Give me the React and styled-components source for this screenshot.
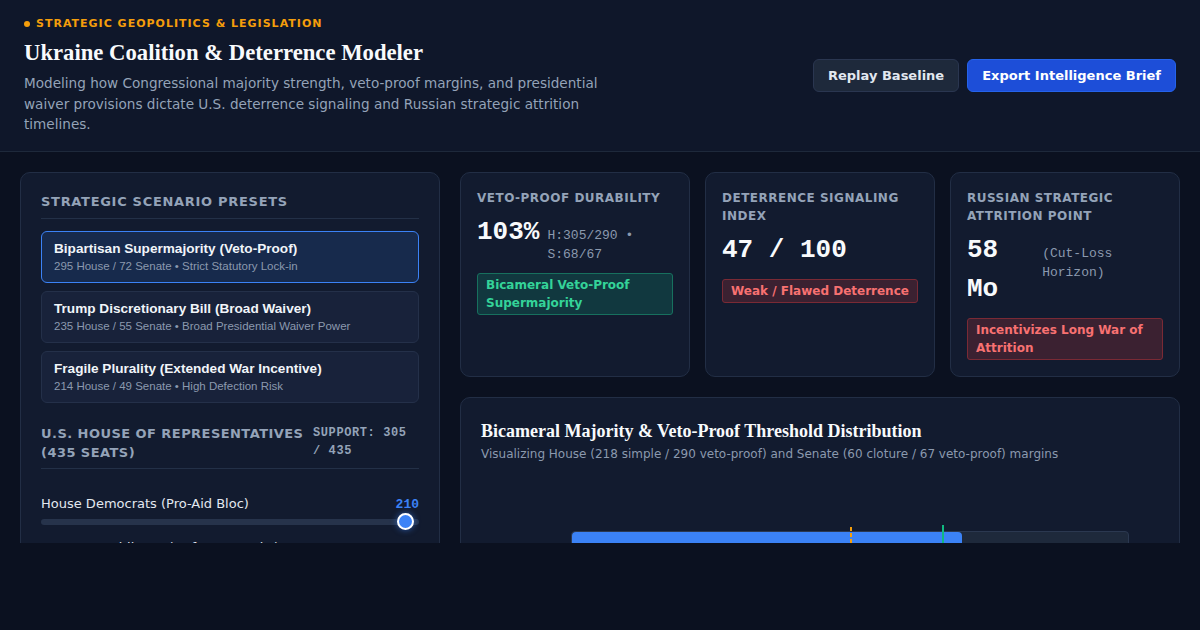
import React, { useState } from "react";
import styled, { createGlobalStyle } from "styled-components";

const GlobalStyle = createGlobalStyle`
  * { box-sizing: border-box; }
  html, body {
    margin: 0;
    padding: 0;
    background: #0b1120;
  }
  body {
    font-family: "DejaVu Sans", "Noto Sans", sans-serif;
    color: #e2e8f0;
  }
`;

const SCENARIOS = [
  {
    id: "bipartisan",
    title: "Bipartisan Supermajority (Veto-Proof)",
    meta: "295 House / 72 Senate • Strict Statutory Lock-in",
  },
  {
    id: "trump",
    title: "Trump Discretionary Bill (Broad Waiver)",
    meta: "235 House / 55 Senate • Broad Presidential Waiver Power",
  },
  {
    id: "fragile",
    title: "Fragile Plurality (Extended War Incentive)",
    meta: "214 House / 49 Senate • High Defection Risk",
  },
];

const HOUSE_SEATS = 435;
const HOUSE_SIMPLE = 218;
const HOUSE_VETO = 290;

const App = () => {
  const [active, setActive] = useState("bipartisan");
  const [dems, setDems] = useState(210);
  const [reps, setReps] = useState(95);
  const support = dems + reps;

  const pct = (n) => `${(n / HOUSE_SEATS) * 100}%`;

  return (
    <>
      <GlobalStyle />
      <Frame>
        <Header>
          <HeaderText>
            <Eyebrow>Strategic Geopolitics &amp; Legislation</Eyebrow>
            <Title>Ukraine Coalition &amp; Deterrence Modeler</Title>
            <Lead>
              Modeling how Congressional majority strength, veto-proof margins,
              and presidential waiver provisions dictate U.S. deterrence
              signaling and Russian strategic attrition timelines.
            </Lead>
          </HeaderText>
          <HeaderActions>
            <Button>Replay Baseline</Button>
            <Button $primary>Export Intelligence Brief</Button>
          </HeaderActions>
        </Header>

        <Main>
          <Panel>
            <PanelHeading>Strategic Scenario Presets</PanelHeading>
            <PresetList>
              {SCENARIOS.map((s) => (
                <Preset
                  key={s.id}
                  $active={active === s.id}
                  onClick={() => setActive(s.id)}
                >
                  <PresetTitle>{s.title}</PresetTitle>
                  <PresetMeta>{s.meta}</PresetMeta>
                </Preset>
              ))}
            </PresetList>

            <ChamberHeader>
              <ChamberTitle>U.S. House of Representatives (435 Seats)</ChamberTitle>
              <ChamberCount>
                Support: {support} / {HOUSE_SEATS}
              </ChamberCount>
            </ChamberHeader>

            <SliderGroup>
              <SliderLabelRow>
                <SliderLabel>House Democrats (Pro-Aid Bloc)</SliderLabel>
                <SliderValue>{dems}</SliderValue>
              </SliderLabelRow>
              <Range
                type="range"
                min={0}
                max={213}
                value={dems}
                onChange={(e) => setDems(Number(e.target.value))}
              />
            </SliderGroup>
            <SliderGroup>
              <SliderLabelRow>
                <SliderLabel>House Republicans (Defense Hawks)</SliderLabel>
                <SliderValue>{reps}</SliderValue>
              </SliderLabelRow>
              <Range
                type="range"
                min={0}
                max={222}
                value={reps}
                onChange={(e) => setReps(Number(e.target.value))}
              />
            </SliderGroup>
          </Panel>

          <RightColumn>
            <StatGrid>
              <StatCard>
                <StatLabel>Veto-Proof Durability</StatLabel>
                <StatRow>
                  <StatValue>103%</StatValue>
                  <StatAside>H:305/290 • S:68/67</StatAside>
                </StatRow>
                <Badge $tone="good">Bicameral Veto-Proof Supermajority</Badge>
              </StatCard>
              <StatCard>
                <StatLabel>Deterrence Signaling Index</StatLabel>
                <StatRow>
                  <StatValue>47 / 100</StatValue>
                </StatRow>
                <Badge $tone="bad">Weak / Flawed Deterrence</Badge>
              </StatCard>
              <StatCard>
                <StatLabel>Russian Strategic Attrition Point</StatLabel>
                <StatRow>
                  <StatValue>58 Mo</StatValue>
                  <StatAside>(Cut-Loss Horizon)</StatAside>
                </StatRow>
                <Badge $tone="bad">Incentivizes Long War of Attrition</Badge>
              </StatCard>
            </StatGrid>

            <ChartCard>
              <ChartTitle>
                Bicameral Majority &amp; Veto-Proof Threshold Distribution
              </ChartTitle>
              <ChartSub>
                Visualizing House (218 simple / 290 veto-proof) and Senate (60
                cloture / 67 veto-proof) margins
              </ChartSub>
              <ChartBody>
                <BarRow>
                  <BarLabel>House</BarLabel>
                  <Track>
                    <Fill style={{ width: pct(support) }} />
                    <Marker $kind="simple" style={{ left: pct(HOUSE_SIMPLE) }} />
                    <Marker $kind="veto" style={{ left: pct(HOUSE_VETO) }} />
                  </Track>
                  <BarValue>{support}</BarValue>
                </BarRow>
              </ChartBody>
            </ChartCard>
          </RightColumn>
        </Main>
      </Frame>
    </>
  );
};

export default App;

// Styled Components
const Frame = styled.div`
  height: 543px;
  overflow: hidden;
  display: flex;
  flex-direction: column;
`;

const Header = styled.header`
  display: flex;
  align-items: center;
  justify-content: space-between;
  padding: 16px 24px 16px;
  background: #0f172a;
  border-bottom: 1px solid #1e293b;
`;

const HeaderText = styled.div`
  display: flex;
  flex-direction: column;
`;

const Eyebrow = styled.div`
  display: flex;
  align-items: center;
  gap: 6px;
  font-size: 11px;
  font-weight: bold;
  letter-spacing: 1px;
  text-transform: uppercase;
  color: #f59e0b;
  line-height: 16px;

  &::before {
    content: "";
    width: 6px;
    height: 6px;
    border-radius: 50%;
    background: #f59e0b;
  }
`;

const Title = styled.h1`
  margin: 7px 0 0;
  font-family: "Liberation Serif", "Times New Roman", serif;
  font-size: 22.7px;
  line-height: 28px;
  font-weight: bold;
  color: #f8fafc;
`;

const Lead = styled.p`
  margin: 6px 0 0;
  max-width: 600px;
  font-size: 13.6px;
  line-height: 20.5px;
  color: #94a3b8;
`;

const HeaderActions = styled.div`
  display: flex;
  gap: 8px;
`;

const Button = styled.button`
  font-family: "DejaVu Sans", sans-serif;
  font-size: 13px;
  font-weight: bold;
  line-height: 17px;
  padding: 7px 14px;
  border-radius: 6px;
  cursor: pointer;
  color: ${(p) => (p.$primary ? "#ffffff" : "#e2e8f0")};
  background: ${(p) => (p.$primary ? "#1d4ed8" : "#1e293b")};
  border: 1px solid ${(p) => (p.$primary ? "#2563eb" : "#2a3650")};
`;

const Main = styled.main`
  flex: 1;
  display: grid;
  grid-template-columns: 420px 1fr;
  gap: 20px;
  padding: 20px;
  align-items: start;
`;

const Panel = styled.section`
  background: #121b2f;
  border: 1px solid #222e45;
  border-radius: 10px;
  padding: 20px;
`;

const PanelHeading = styled.h2`
  margin: 0;
  padding-bottom: 7px;
  border-bottom: 1px solid #233047;
  font-size: 13px;
  line-height: 18px;
  font-weight: bold;
  letter-spacing: 0.7px;
  text-transform: uppercase;
  color: #94a3b8;
`;

const PresetList = styled.div`
  display: flex;
  flex-direction: column;
  gap: 8px;
  margin-top: 12px;
`;

const Preset = styled.button`
  display: flex;
  flex-direction: column;
  align-items: flex-start;
  text-align: left;
  width: 100%;
  padding: 9px 12px;
  border-radius: 6px;
  cursor: pointer;
  font-family: "Liberation Sans", Arial, sans-serif;
  background: ${(p) => (p.$active ? "#172a4c" : "#18223a")};
  border: 1px solid ${(p) => (p.$active ? "#3b82f6" : "#243049")};
`;

const PresetTitle = styled.span`
  font-size: 13.6px;
  line-height: 16px;
  font-weight: bold;
  color: #f1f5f9;
`;

const PresetMeta = styled.span`
  margin-top: 2px;
  font-size: 11.5px;
  line-height: 14px;
  color: #8b99ae;
`;

const ChamberHeader = styled.div`
  display: flex;
  justify-content: space-between;
  align-items: flex-start;
  margin-top: 21px;
  padding-bottom: 6px;
  border-bottom: 1px solid #233047;
`;

const ChamberTitle = styled.h3`
  margin: 0;
  flex: 1;
  font-size: 13px;
  line-height: 19px;
  font-weight: bold;
  letter-spacing: 0.45px;
  text-transform: uppercase;
  color: #94a3b8;
`;

const ChamberCount = styled.span`
  width: 106px;
  flex-shrink: 0;
  font-family: "Liberation Mono", "Courier New", monospace;
  font-size: 12px;
  line-height: 18px;
  font-weight: bold;
  letter-spacing: 0.6px;
  text-transform: uppercase;
  color: #94a3b8;
`;

const SliderGroup = styled.div`
  margin-top: 26px;

  & + & {
    margin-top: 14px;
  }
`;

const SliderLabelRow = styled.div`
  display: flex;
  justify-content: space-between;
  align-items: baseline;
`;

const SliderLabel = styled.span`
  font-size: 13px;
  line-height: 18px;
  color: #e2e8f0;
`;

const SliderValue = styled.span`
  font-family: "Liberation Mono", "Courier New", monospace;
  font-size: 13px;
  font-weight: bold;
  color: #3b82f6;
`;

const Range = styled.input`
  -webkit-appearance: none;
  appearance: none;
  display: block;
  width: 100%;
  height: 6px;
  margin: 6px 0 0;
  border-radius: 3px;
  background: #26334b;
  outline: none;

  &::-webkit-slider-thumb {
    -webkit-appearance: none;
    width: 17px;
    height: 17px;
    border-radius: 50%;
    background: #3b82f6;
    border: 2px solid #ffffff;
    box-shadow: 0 0 6px rgba(59, 130, 246, 0.6);
    cursor: pointer;
  }
`;

const RightColumn = styled.div`
  display: flex;
  flex-direction: column;
  gap: 20px;
  min-width: 0;
`;

const StatGrid = styled.div`
  display: grid;
  grid-template-columns: repeat(3, 1fr);
  gap: 15px;
`;

const StatCard = styled.div`
  background: #121b2f;
  border: 1px solid #222e45;
  border-radius: 10px;
  padding: 16px;
  display: flex;
  flex-direction: column;
  align-items: flex-start;
`;

const StatLabel = styled.div`
  font-size: 12px;
  line-height: 18px;
  font-weight: bold;
  letter-spacing: 0.5px;
  text-transform: uppercase;
  color: #94a3b8;
`;

const StatRow = styled.div`
  display: flex;
  align-items: baseline;
  gap: 8px;
  margin-top: 6px;
  width: 100%;
`;

const StatValue = styled.span`
  font-family: "Liberation Mono", "Courier New", monospace;
  font-size: 26px;
  line-height: 39px;
  font-weight: bold;
  color: #f8fafc;
`;

const StatAside = styled.span`
  font-family: "Liberation Mono", "Courier New", monospace;
  font-size: 13px;
  line-height: 19px;
  color: #8b99ae;
`;

const BADGE_TONES = {
  good: { bg: "#11383f", border: "#17705e", fg: "#34d399" },
  bad: { bg: "#3b2131", border: "#7a2a35", fg: "#f87171" },
};

const Badge = styled.span`
  margin-top: 9px;
  padding: 2px 8px;
  border-radius: 3px;
  font-size: 12px;
  line-height: 18px;
  font-weight: bold;
  background: ${(p) => BADGE_TONES[p.$tone].bg};
  border: 1px solid ${(p) => BADGE_TONES[p.$tone].border};
  color: ${(p) => BADGE_TONES[p.$tone].fg};
`;

const ChartCard = styled.section`
  background: #121b2f;
  border: 1px solid #222e45;
  border-radius: 10px;
  padding: 21px 20px 24px;
`;

const ChartTitle = styled.h3`
  margin: 0;
  font-family: "Liberation Serif", "Times New Roman", serif;
  font-size: 18px;
  line-height: 24px;
  font-weight: bold;
  color: #f8fafc;
`;

const ChartSub = styled.p`
  margin: 2px 0 0;
  font-size: 12px;
  line-height: 18px;
  color: #8b99ae;
`;

const ChartBody = styled.div`
  padding-top: 68px;
  display: flex;
  flex-direction: column;
  gap: 18px;
`;

const BarRow = styled.div`
  display: flex;
  align-items: center;
`;

const BarLabel = styled.span`
  width: 90px;
  padding-top: 12px;
  font-size: 12px;
  color: #cbd5e1;
`;

const BarValue = styled.span`
  width: 30px;
  padding-top: 12px;
  text-align: right;
  font-family: "Liberation Mono", monospace;
  font-size: 11px;
  color: #94a3b8;
`;

const Track = styled.div`
  position: relative;
  flex: 1;
  height: 28px;
  background: #1e293b;
  border: 1px solid #2b3850;
  border-radius: 4px;
`;

const Fill = styled.div`
  height: 100%;
  background: #3b82f6;
  border-radius: 4px;
`;

const Marker = styled.div`
  position: absolute;
  top: ${(p) => (p.$kind === "veto" ? "-7px" : "-5px")};
  bottom: -4px;
  width: 2px;
  margin-left: -1px;
  ${(p) =>
    p.$kind === "veto"
      ? "background: #10b981;"
      : "background: repeating-linear-gradient(to bottom, #f59e0b 0 4px, transparent 4px 6px);"}
`;
